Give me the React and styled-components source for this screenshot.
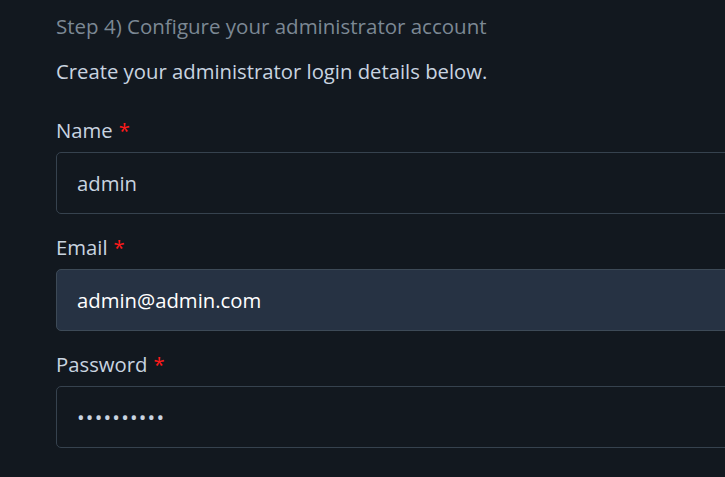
import React from "react";
import styled, { createGlobalStyle } from "styled-components";

const Global = createGlobalStyle`
  html, body { margin: 0; padding: 0; background: #12181f; overflow: hidden; }
  body { font-family: "Open Sans", "Noto Sans", sans-serif; }
`;

const Page = styled.div`
  width: 725px;
  height: 477px;
  overflow: hidden;
  background: #12181f;
  padding: 12px 0 0 56px;
  box-sizing: border-box;
`;

const Form = styled.div`
  width: 760px;
  display: flex;
  flex-direction: column;
`;

const StepTitle = styled.div`
  color: #7c8894;
  font-size: 20.5px;
  line-height: 28px;
`;

const Intro = styled.p`
  margin: 17px 0 0;
  color: #c9d4e0;
  font-size: 20.3px;
  line-height: 28px;
`;

const Field = styled.div`
  display: flex;
  flex-direction: column;
  gap: 8px;
  margin-top: ${(p) => p.$top}px;
`;

const Label = styled.label`
  color: #c9d4e0;
  font-size: 20.3px;
  line-height: 28px;
`;

const Req = styled.span`
  color: #ff1a1a;
  margin-left: 6px;
`;

const Input = styled.input`
  box-sizing: border-box;
  height: 62px;
  width: 100%;
  border: 1px solid ${(p) => (p.$focus ? "#3d4a57" : "#36424e")};
  border-radius: 5px;
  background: ${(p) => (p.$focus ? "#263243" : "#12181f")};
  color: ${(p) => (p.$focus ? "#ffffff" : "#c9d4e0")};
  font-family: "Open Sans", "Noto Sans", sans-serif;
  font-size: 20.3px;
  letter-spacing: ${(p) => (p.type === "password" ? "1.2px" : "0")};
  padding: 0 20px;
  outline: none;
`;

export default function App() {
  return (
    <>
      <Global />
      <Page>
        <Form>
          <StepTitle>Step 4) Configure your administrator account</StepTitle>
          <Intro>Create your administrator login details below.</Intro>
          <Field $top={31}>
            <Label>
              Name<Req>*</Req>
            </Label>
            <Input defaultValue="admin" />
          </Field>
          <Field $top={19}>
            <Label>
              Email<Req>*</Req>
            </Label>
            <Input $focus defaultValue="admin@admin.com" />
          </Field>
          <Field $top={19}>
            <Label>
              Password<Req>*</Req>
            </Label>
            <Input type="password" defaultValue="adminadmin" />
          </Field>
        </Form>
      </Page>
    </>
  );
}
